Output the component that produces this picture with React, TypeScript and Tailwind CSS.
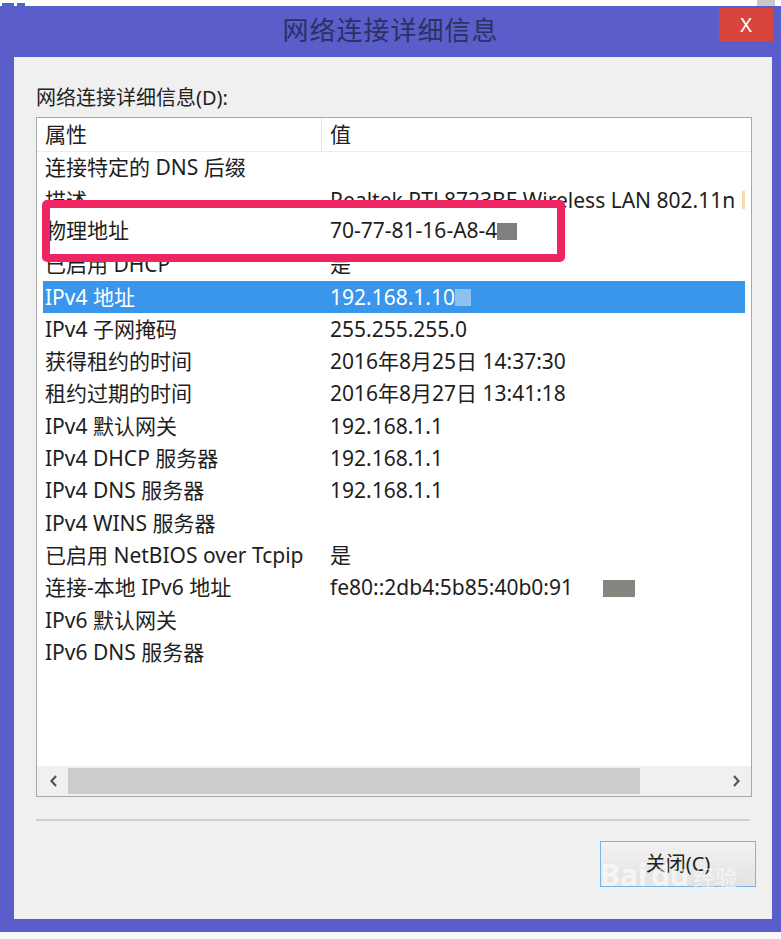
import React from 'react';

type Row = { prop: string; value: string; mask?: { ml: number; w: number; color: string } };

const ROWS: Row[] = [
  { prop: '连接特定的 DNS 后缀', value: '' },
  { prop: '描述', value: 'Realtek RTL8723BE Wireless LAN 802.11n' },
  { prop: '物理地址', value: '70-77-81-16-A8-4', mask: { ml: 0, w: 20, color: '#808080' } },
  { prop: '已启用 DHCP', value: '是' },
  { prop: 'IPv4 地址', value: '192.168.1.10', mask: { ml: 0, w: 16, color: '#8cc2f2' } },
  { prop: 'IPv4 子网掩码', value: '255.255.255.0' },
  { prop: '获得租约的时间', value: '2016年8月25日 14:37:30' },
  { prop: '租约过期的时间', value: '2016年8月27日 13:41:18' },
  { prop: 'IPv4 默认网关', value: '192.168.1.1' },
  { prop: 'IPv4 DHCP 服务器', value: '192.168.1.1' },
  { prop: 'IPv4 DNS 服务器', value: '192.168.1.1' },
  { prop: 'IPv4 WINS 服务器', value: '' },
  { prop: '已启用 NetBIOS over Tcpip', value: '是' },
  { prop: '连接-本地 IPv6 地址', value: 'fe80::2db4:5b85:40b0:91', mask: { ml: 30, w: 32, color: '#85847f' } },
  { prop: 'IPv6 默认网关', value: '' },
  { prop: 'IPv6 DNS 服务器', value: '' },
];

const SELECTED = 4;
const FONT = { fontFamily: '"Noto Sans", "Noto Sans CJK SC", sans-serif' };

function Chevron({ dir }: { dir: 'left' | 'right' }) {
  return (
    <svg width="10" height="14" viewBox="0 0 10 14">
      <path
        d={dir === 'left' ? 'M7 2 L2.5 7 L7 12' : 'M3 2 L7.5 7 L3 12'}
        fill="none"
        stroke="#555"
        strokeWidth="2.2"
      />
    </svg>
  );
}

export default function App() {
  return (
    <div className="relative w-[781px] h-[939px] overflow-hidden bg-[#f8f8f8]" style={FONT}>
      {/* strip of the window behind */}
      <div className="h-[6px] flex justify-between bg-white">
        <div className="flex gap-[3px] items-end pl-[2px]">
          <span className="w-[12px] h-[3px] bg-[#3a6fc4]" />
          <span className="w-[8px] h-[3px] bg-[#3a6fc4]" />
        </div>
        <span className="w-[18px] mr-[6px] bg-[#c8c8c8]" />
      </div>

      {/* dialog frame */}
      <div className="bg-[#5b5dcb] pl-[14px] pr-[9px] pb-[13px]">
        <div className="relative h-[51px] flex items-center justify-center -ml-[14px] -mr-[9px]">
          <span className="text-[26px] text-[#2e3062] tracking-[1px] -mt-[2px]">网络连接详细信息</span>
          <div className="absolute right-[8px] top-[2px] w-[54px] h-[33px] bg-[#d8453c] flex items-center justify-center text-white text-[20px]">
            X
          </div>
        </div>

        <div className="bg-[#f0f0f0] h-[862px] pt-[28px] pl-[22px] pr-[20px] flex flex-col">
          <div className="h-[26px] leading-[26px] text-[20px] text-[#222]">网络连接详细信息(D):</div>

          {/* list view */}
          <div className="mt-[6px] w-[716px] h-[680px] border border-[#a8a8a8] bg-white flex flex-col">
            <div className="h-[34px] flex items-center text-[21px] text-[#222] border-b border-[#ececec]">
              <div className="w-[285px] pl-[8px] h-full flex items-center border-r border-[#e6e6e6]">属性</div>
              <div className="pl-[8px]">值</div>
            </div>

            <div className="flex-1 px-[6px]">
              {ROWS.map((r, i) => {
                const sel = i === SELECTED;
                return (
                  <div
                    key={i}
                    className={`h-[32.3px] flex items-center text-[21px] whitespace-nowrap ${
                      sel ? 'bg-[#3a96ea] text-white' : 'text-[#1e1e1e]'
                    }`}
                  >
                    <div className="w-[285px] pl-[2px] overflow-hidden">{r.prop}</div>
                    <div className="flex-1 pl-[2px] overflow-hidden flex items-center">
                      <span>{r.value}</span>
                      {r.mask && (
                        <span
                          className="h-[17px] inline-block"
                          style={{ marginLeft: r.mask.ml, width: r.mask.w, background: r.mask.color }}
                        />
                      )}
                      {i === 1 && <span className="ml-[7px] w-[3px] h-[18px] bg-[#f3d8b0]" />}
                    </div>
                  </div>
                );
              })}
            </div>

            {/* horizontal scrollbar */}
            <div className="h-[30px] bg-[#f0f0f0] flex items-center">
              <div className="w-[31px] flex justify-center pl-[2px]">
                <Chevron dir="left" />
              </div>
              <div className="w-[572px] h-[26px] bg-[#cdcdcd]" />
              <div className="flex-1 flex justify-end pr-[10px]">
                <Chevron dir="right" />
              </div>
            </div>
          </div>

          <div className="mt-[22px] w-[714px] h-[2px] bg-[#d0d0d0]" />

          <div className="mt-[20px] flex justify-end">
            <div className="mr-[-4px] w-[156px] h-[46px] border border-[#7db6e6] bg-gradient-to-b from-[#f2f2f2] to-[#e3e3e3] flex items-center justify-center text-[20px] text-[#222]">
              关闭(C)
            </div>
          </div>
        </div>
      </div>

      {/* annotation: highlighted row */}
      <div className="absolute left-[42px] top-[200px] w-[523px] h-[62px] border-[8px] border-[#ef2563] rounded-[5px] bg-white overflow-hidden">
        <div className="h-full flex items-center text-[21px] text-[#1e1e1e] whitespace-nowrap -ml-[5px]">
          <div className="w-[285px]">物理地址</div>
          <span>70-77-81-16-A8-4</span>
          <span className="w-[20px] h-[17px] bg-[#7f7f7f]" />
        </div>
      </div>

      {/* watermark */}
      <div className="absolute left-[600px] top-[860px] flex items-end gap-[4px] text-white/60 font-bold">
        <span className="text-[30px] leading-[30px]">Bai</span>
        <span className="text-[30px] leading-[30px]">du</span>
        <span className="text-[22px] leading-[26px] font-normal">经验</span>
      </div>
    </div>
  );
}
